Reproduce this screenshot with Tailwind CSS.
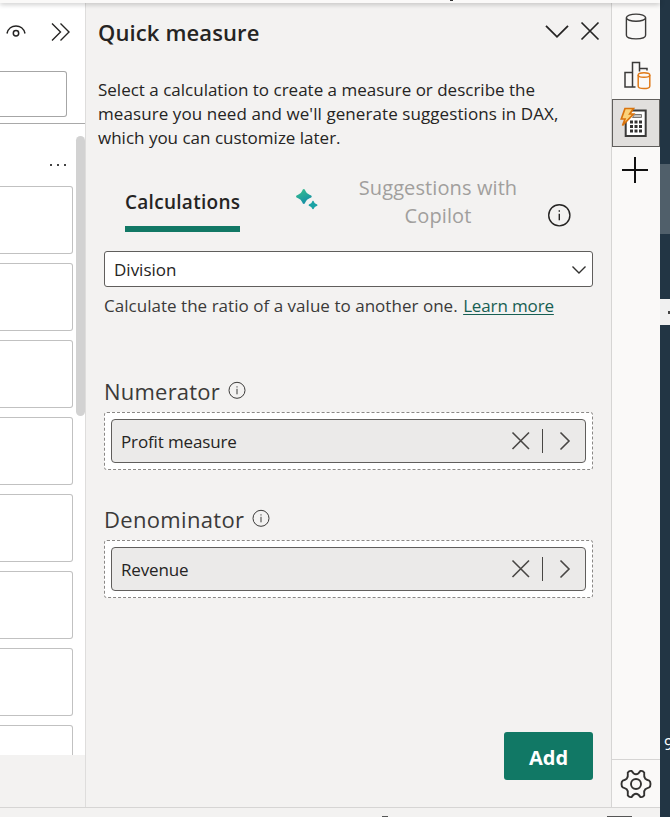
<!DOCTYPE html>
<html lang="en">
<head>
<meta charset="utf-8">
<title>Quick measure</title>
<script src="https://cdn.jsdelivr.net/npm/@tailwindcss/browser@4"></script>
</head>
<body class="w-[670px] h-[817px] overflow-hidden bg-[#f3f2f1] font-['Open_Sans','Noto_Sans',sans-serif] text-[#252423]">
<div class="flex w-[670px] h-[817px]">
  <div class="flex flex-col w-[660px]">
    <div class="relative z-10 h-[3px] shrink-0 bg-[#faf9f8] shadow-[0_1px_5px_rgba(0,0,0,0.3)]">
      <span class="absolute left-[450px] top-0 w-[3px] h-px bg-[#333]"></span>
    </div>
    <div class="flex h-[804px] shrink-0">
      <!-- Neighbouring pane -->
      <aside class="w-[86px] border-r border-[#dedddc] flex flex-col shrink-0">
        <div class="h-[121px] bg-white border-b border-[#a9a9a9] shrink-0">
          <div class="flex h-[68px] pl-[6px] pt-[19px] gap-[25px]">
            <svg class="w-5 h-5" viewBox="0 0 20 20" fill="none" stroke="#252423" stroke-width="1.5"><path d="M1 11.500C3 1.500 17 1.500 19 11.500" /><circle cx="10" cy="11.300" r="2.700"/></svg>
            <svg class="w-5 h-5" viewBox="0 0 20 20" fill="none" stroke="#252423" stroke-width="1.4"><path d="M1 1.500L9.500 10L1 18.500M9.500 1.500L18 10L9.500 18.500"/></svg>
          </div>
          <div class="w-[67px] h-[46px] border border-l-0 border-[#a6a6a6] rounded-r-[3px]"></div>
        </div>
        <div class="relative h-[631px] bg-white overflow-hidden pt-[40px] shrink-0">
          <div class="flex gap-[5px] h-[2px] pl-[50px]"><i class="w-[2px] bg-[#444]"></i><i class="w-[2px] bg-[#444]"></i><i class="w-[2px] bg-[#444]"></i></div>
          <div class="flex flex-col gap-[9px] pt-[20px]">
            <div class="w-[73px] h-[68px] shrink-0 border border-l-0 border-[#c1c1c1] rounded-r-[3px]"></div>
            <div class="w-[73px] h-[68px] shrink-0 border border-l-0 border-[#c1c1c1] rounded-r-[3px]"></div>
            <div class="w-[73px] h-[68px] shrink-0 border border-l-0 border-[#c1c1c1] rounded-r-[3px]"></div>
            <div class="w-[73px] h-[68px] shrink-0 border border-l-0 border-[#c1c1c1] rounded-r-[3px]"></div>
            <div class="w-[73px] h-[68px] shrink-0 border border-l-0 border-[#c1c1c1] rounded-r-[3px]"></div>
            <div class="w-[73px] h-[68px] shrink-0 border border-l-0 border-[#c1c1c1] rounded-r-[3px]"></div>
            <div class="w-[73px] h-[68px] shrink-0 border border-l-0 border-[#c1c1c1] rounded-r-[3px]"></div>
            <div class="w-[73px] h-[68px] shrink-0 border border-l-0 border-[#c1c1c1] rounded-r-[3px]"></div>
          </div>
          <div class="absolute right-0 top-[12px] w-[9px] h-[280px] rounded-full bg-[#d2d2d2]"></div>
        </div>
      </aside>
      <!-- Quick measure pane -->
      <main class="w-[525px] shrink-0">
        <div class="flex items-start h-[60px] pt-[14px] pl-[12px] pr-[11px]">
          <h1 class="text-[22px] leading-[30px] font-semibold whitespace-nowrap flex-1 tracking-[0.12px]">Quick measure</h1>
          <svg class="w-6 h-[20px] mr-[11px] mt-[4px]" viewBox="0 0 24 20" fill="none" stroke="#252423" stroke-width="1.8"><path d="M1 4.800L12 15.800L23 4.800"/></svg>
          <svg class="w-5 h-[20px] mt-[4px]" viewBox="0 0 20 20" fill="none" stroke="#252423" stroke-width="1.700"><path d="M1.500 1.500L18.500 18.500M18.500 1.500L1.500 18.500"/></svg>
        </div>
        <p class="mt-[15px] ml-[12px] text-[17px] leading-6 whitespace-nowrap">Select a calculation to create a measure or describe the<br><span class="tracking-[0.08px]">measure you need and we'll generate suggestions in DAX,</span><br>which you can customize later.</p>
        <div class="flex h-[101px]">
          <div class="ml-[39px] pt-[38px] w-[115px]">
            <div class="text-[19px] leading-7 font-semibold whitespace-nowrap tracking-[0.28px]">Calculations</div>
            <div class="mt-[10px] h-[6px] bg-[#117865]"></div>
          </div>
          <svg class="w-[22px] h-[22px] ml-[56px] mt-[38px]" viewBox="0 0 22 22"><defs><linearGradient id="g" x1="0" y1="0" x2="0.500" y2="1"><stop offset="0" stop-color="#3bc48d"/><stop offset="1" stop-color="#158fa5"/></linearGradient></defs><path fill="url(#g)" d="M7.800 1Q8.900 1 9.500 3Q10.500 5.800 13.500 6.700Q15.800 7.400 15.800 8.500T13.500 10.300Q10.500 11.200 9.500 14Q8.900 16 7.800 16T6.100 14Q5.100 11.200 2.100 10.300Q0 9.600 0 8.500T2.100 6.700Q5.100 5.800 6.100 3Q6.700 1 7.800 1Z"/><path fill="#19a2a4" d="M17 12.800Q17.700 12.800 18 14Q18.500 15.600 20.200 16.100Q21.500 16.500 21.500 17.200T20.200 18.200Q18.500 18.700 18 20.300Q17.700 21.300 17 21.300T16 20.300Q15.500 18.700 13.800 18.200Q12.600 17.800 12.600 17.200T13.800 16.100Q15.500 15.600 16 14Q16.300 12.800 17 12.800Z"/></svg>
          <div class="w-[240px] pt-[24px] text-center text-[#a19f9d] text-[20px] leading-7 whitespace-nowrap tracking-[0.1px]">Suggestions with<br>Copilot</div>
          <svg class="w-6 h-6 mt-[53px] -ml-[11px]" viewBox="0 0 24 24" fill="none" stroke="#252423"><circle cx="12.300" cy="12.300" r="10.600" stroke-width="1.400"/><path stroke-width="1.400" d="M12.300 10.700V17.300M12.300 7.300V8.800"/></svg>
        </div>
        <div class="mx-[18px]">
          <div class="flex items-center w-[489px] h-[36px] bg-white border border-[#605e5c] rounded-[3px] pl-[9px] pr-[6px] text-[17px]"><span class="flex-1 pt-[2px]">Division</span>
            <svg class="w-[14px] h-[10px] mt-[2px]" viewBox="0 0 14 10" fill="none" stroke="#323130" stroke-width="1.400"><path d="M.5 1.500L7 8L13.500 1.500"/></svg>
          </div>
          <div class="mt-[7px] text-[17px] leading-6 whitespace-nowrap text-[#3b3a39]"><span class="tracking-[0.03px]">Calculate the ratio of a value to another one.</span> <a class="ml-px text-[#175f53] underline underline-offset-2 tracking-[-0.14px]">Learn more</a></div>
          <div class="mt-[57px] flex h-[37px] text-[#3b3a39]">
            <span class="text-[22px] leading-8 tracking-[0.22px]">Numerator</span>
            <svg class="w-[18px] h-[18px] ml-[8px] mt-[6px]" viewBox="0 0 18 18" fill="none" stroke="#3b3a39"><circle cx="9" cy="9.300" r="8"/><path d="M9 7.800V13.300M9 5.300V6.500"/></svg>
          </div>
          <div class="w-[489px] h-[58px] bg-white border border-dashed border-[#8a8886] rounded-[3px] p-[6px]">
            <div class="flex items-center h-[44px] w-[475px] bg-[#ebeae9] border border-[#605e5c] rounded-[4px] pl-[9px] text-[17px]"><span class="flex-1 pt-px tracking-[-0.14px]">Profit measure</span>
              <svg class="w-[79px] h-[26px]" viewBox="0 0 79 26" fill="none" stroke="#484644" stroke-width="1.600"><path d="M6.500 4.500L23 21M23 4.500L6.500 21M54.500 4.500L63 13L54.500 21.500"/><path stroke-width="1" d="M36.500 1V25"/></svg>
            </div>
          </div>
          <div class="mt-[33px] flex h-[37px] text-[#3b3a39]">
            <span class="text-[22px] leading-8 tracking-[0.32px]">Denominator</span>
            <svg class="w-[18px] h-[18px] ml-[8px] mt-[6px]" viewBox="0 0 18 18" fill="none" stroke="#3b3a39"><circle cx="9" cy="9.300" r="8"/><path d="M9 7.800V13.300M9 5.300V6.500"/></svg>
          </div>
          <div class="w-[489px] h-[58px] bg-white border border-dashed border-[#8a8886] rounded-[3px] p-[6px]">
            <div class="flex items-center h-[44px] w-[475px] bg-[#ebeae9] border border-[#605e5c] rounded-[4px] pl-[9px] text-[17px]"><span class="flex-1 pt-px tracking-[-0.14px]">Revenue</span>
              <svg class="w-[79px] h-[26px]" viewBox="0 0 79 26" fill="none" stroke="#484644" stroke-width="1.600"><path d="M6.500 4.500L23 21M23 4.500L6.500 21M54.500 4.500L63 13L54.500 21.500"/><path stroke-width="1" d="M36.500 1V25"/></svg>
            </div>
          </div>
          <div class="mt-[134px] flex justify-end"><button class="w-[89px] h-[48px] pt-[3px] bg-[#117865] rounded-[3px] text-white text-[20px] font-bold">Add</button></div>
        </div>
      </main>
      <!-- Pane switcher -->
      <nav class="w-[49px] shrink-0 bg-[#faf9f8] border-l border-[#d6d5d4] flex flex-col">
        <svg class="w-[22px] h-[28px] ml-[13px] mt-[10px]" viewBox="0 0 22 28" fill="none" stroke="#3b3a39" stroke-width="1.400"><ellipse cx="11" cy="4.700" rx="9.600" ry="3.600"/><path d="M1.400 4.700V22.300C1.400 27 20.600 27 20.600 22.300V4.700"/></svg>
        <svg class="w-[28px] h-[30px] ml-[12px] mt-[20px]" viewBox="0 0 28 30" fill="none" stroke="#3b3a39" stroke-width="1.500"><path d="M11.500 26H1V11.500H8.500V26M8.500 12V1.500H15.500V10.500M15.500 7.500H23V9.500"/><g stroke="#e07b1a"><ellipse cx="20" cy="14" rx="5.800" ry="2.300" fill="#faf9f8"/><path d="M14.200 14V25.300C14.200 28.300 25.800 28.300 25.800 25.300V14"/></g></svg>
        <div class="w-[48px] h-[48px] mt-[8px] bg-[#e1dfdd] border border-[#605e5c]">
          <svg class="w-[46px] h-[46px]" viewBox="0 0 46 46"><path d="M14 10.500H32.700V36H12.700V20" fill="#fff" stroke="#3b3a39" stroke-width="2"/><path d="M21.500 14.500H28.500V17.500H19.500Z" fill="#c8c6c4" stroke="#797775"/><g fill="#323130"><path d="M17 20.500h3v3h-3zM21.500 20.500h3v3h-3zM26 20.500h3v3h-3zM17 25h3v3h-3zM21.500 25h3v3h-3zM26 25h3v3h-3zM17 29.500h3v3h-3zM21.500 29.500h3v3h-3zM26 29.500h3v3h-3z"/></g><path d="M12 8.500H20.500L16.700 14H20.500L9.500 25.500L12 19H8.300Z" fill="#fbd27a" stroke="#d9730d" stroke-width="1.700"/></svg>
        </div>
        <svg class="w-[26px] h-[26px] ml-[10px] mt-[10px]" viewBox="0 0 26 26" stroke="#111" stroke-width="2"><path d="M13 0V26M0 13H26"/></svg>
        <div class="mt-auto h-[48px] border-t border-[#d6d5d4] flex">
          <svg class="w-[32px] h-[32px] ml-[8px] mt-[8px]" viewBox="0 0 32 32" fill="none" stroke="#323130" stroke-width="1.900" stroke-linejoin="round"><circle cx="16" cy="16" r="5"/><path d="M8.500 3.800Q10 2.600 11.700 3Q13.500 6.200 16 6.200T20.300 3Q22 2.600 23.500 3.800Q24.700 4.700 24.200 6Q23.800 9.300 25.300 10.700Q27 12 29.300 12.700Q30.500 13.500 30.500 16T29.300 19.300Q27 20 25.300 21.300Q23.800 22.700 24.200 26Q24.700 27.300 23.500 28.200Q22 29.400 20.300 29Q18.500 25.800 16 25.800T11.700 29Q10 29.400 8.500 28.200Q7.300 27.300 7.800 26Q8.200 22.700 6.700 21.300Q5 20 2.700 19.300Q1.500 18.500 1.500 16T2.700 12.700Q5 12 6.700 10.700Q8.200 9.300 7.800 6Q7.300 4.700 8.500 3.800Z"/></svg>
        </div>
      </nav>
    </div>
    <footer class="relative h-[10px] border-t border-[#d6d5d4] bg-[#f3f2f1]">
      <span class="absolute left-[382px] top-[8px] w-[6px] h-px bg-[#555]"></span>
      <span class="absolute left-[607px] top-[8px] w-[25px] h-px bg-[#555]"></span>
    </footer>
  </div>
  <!-- Edge of the window behind -->
  <div class="w-[10px] h-full bg-[#223544] flex flex-col overflow-hidden text-white">
    <div class="mt-[164px] h-[70px] bg-[#505f6a]"></div>
    <div class="mt-[65px] h-[26px] bg-[#f0f0f0] pt-[12px] pl-[8px]"><div class="w-[2px] h-[3px] bg-[#444]"></div></div>
    <div class="mt-[409px] pl-[4px] text-[16px] leading-5">9</div>
  </div>
</div>
</body>
</html>
